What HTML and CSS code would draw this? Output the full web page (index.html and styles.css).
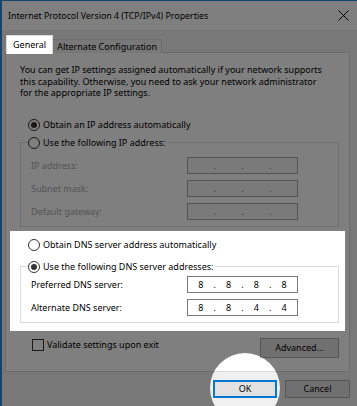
FILE: index.html
```html
<!DOCTYPE html>
<html lang="en">
<head>
  <meta charset="UTF-8" />
  <title>Internet Protocol Version 4 (TCP/IPv4) Properties</title>
  <link rel="stylesheet" href="styles.css">
</head>
<body>
  <div class="screen">
    <div class="window">
      <div class="titlebar">
        <span class="title">Internet Protocol Version 4 (TCP/IPv4) Properties</span>
        <svg class="close" width="11" height="11" viewBox="0 0 11 11">
          <path d="M0.5 0.5L10.5 10.5M10.5 0.5L0.5 10.5" stroke="#000" stroke-width="1" fill="none" />
        </svg>
      </div>

      <div class="content">
        <div class="tabs">
          <div class="tab tab-active">General</div>
          <div class="tab">Alternate Configuration</div>
        </div>

        <div class="panel">
          <p class="intro">
            You can get IP settings assigned automatically if your network supports<br>
            this capability. Otherwise, you need to ask your network administrator<br>
            for the appropriate IP settings.
          </p>

          <div class="option option-ip-auto">
            <span class="radio radio-checked"></span>
            Obtain an IP address automatically
          </div>

          <fieldset class="group group-ip">
            <legend class="option">
              <span class="radio"></span>
              Use the following IP address:
            </legend>
            <div class="field-row">
              <span class="field-label disabled">IP address:</span>
              <div class="ip-box ip-disabled">
                <span class="oct"></span><span class="dot">.</span><span class="oct"></span><span class="dot">.</span><span class="oct"></span><span class="dot">.</span><span class="oct"></span>
              </div>
            </div>
            <div class="field-row">
              <span class="field-label disabled">Subnet mask:</span>
              <div class="ip-box ip-disabled">
                <span class="oct"></span><span class="dot">.</span><span class="oct"></span><span class="dot">.</span><span class="oct"></span><span class="dot">.</span><span class="oct"></span>
              </div>
            </div>
            <div class="field-row">
              <span class="field-label disabled">Default gateway:</span>
              <div class="ip-box ip-disabled">
                <span class="oct"></span><span class="dot">.</span><span class="oct"></span><span class="dot">.</span><span class="oct"></span><span class="dot">.</span><span class="oct"></span>
              </div>
            </div>
          </fieldset>

          <div class="option option-dns-auto">
            <span class="radio"></span>
            Obtain DNS server address automatically
          </div>

          <fieldset class="group group-dns">
            <legend class="option">
              <span class="radio radio-checked"></span>
              Use the following DNS server addresses:
            </legend>
            <div class="field-row">
              <span class="field-label">Preferred DNS server:</span>
              <div class="ip-box">
                <span class="oct">8</span><span class="dot">.</span><span class="oct">8</span><span class="dot">.</span><span class="oct">8</span><span class="dot">.</span><span class="oct">8</span>
              </div>
            </div>
            <div class="field-row">
              <span class="field-label">Alternate DNS server:</span>
              <div class="ip-box">
                <span class="oct">8</span><span class="dot">.</span><span class="oct">8</span><span class="dot">.</span><span class="oct">4</span><span class="dot">.</span><span class="oct">4</span>
              </div>
            </div>
          </fieldset>

          <div class="panel-footer">
            <div class="option">
              <span class="checkbox"></span>
              Validate settings upon exit
            </div>
            <div class="button button-advanced">Advanced...</div>
          </div>
        </div>

        <div class="buttons">
          <div class="button button-default">OK</div>
          <div class="button">Cancel</div>
        </div>
      </div>
    </div>

    <!-- dim everything except the DNS block and the OK button -->
    <svg class="dim" width="357" height="406" viewBox="0 0 357 406">
      <path fill-rule="evenodd" fill="#000" fill-opacity="0.5"
        d="M0 0H357V406H0Z M10 231H345V331H10Z M210 388a35 35 0 1 0 70 0a35 35 0 1 0 -70 0Z" />
    </svg>
  </div>
</body>
</html>
```

FILE: styles.css
```css
* {
  box-sizing: border-box;
}
body {
  margin: 0;
  font-family: "Noto Sans", sans-serif;
  font-size: 9px;
  color: #000;
}
.screen {
  position: relative;
  width: 357px;
  height: 406px;
  overflow: hidden;
}
.window {
  width: 357px;
  height: 406px;
  background-color: #f0f0f0;
  border-left: 2px solid #2f86d8;
  border-top: 1px solid #2f86d8;
}
.titlebar {
  height: 29px;
  background-color: #fff;
  display: flex;
  align-items: center;
  justify-content: space-between;
  padding: 0 8px 0 6px;
  font-size: 8.8px;
}
.close {
  display: block;
}
.content {
  padding: 5px 7px 0 3px;
}
.tabs {
  display: flex;
  align-items: flex-end;
  height: 18px;
  padding-left: 1px;
}
.tab {
  height: 14px;
  line-height: 13px;
  padding: 0 4px;
  border: 1px solid #d9d9d9;
  border-bottom: none;
  background-color: #f0f0f0;
  margin-left: -1px;
}
.tab-active {
  position: relative;
  z-index: 1;
  height: 19px;
  line-height: 17px;
  padding: 0 6px;
  background-color: #fff;
  margin-left: 0;
  margin-bottom: -1px;
}
.panel {
  height: 320px;
  margin-top: -1px;
  background-color: #fff;
  border: 1px solid #d9d9d9;
  padding: 11px 0 0 14px;
}
.intro {
  margin: 0;
  line-height: 11.5px;
  white-space: nowrap;
}
.option {
  display: flex;
  align-items: center;
  gap: 3px;
  height: 14px;
  white-space: nowrap;
}
.option-ip-auto {
  margin: 19px 0 0 8px;
}
.radio {
  width: 12px;
  height: 12px;
  border: 1px solid #333;
  border-radius: 50%;
  display: flex;
  align-items: center;
  justify-content: center;
  background-color: #fff;
}
.radio-checked::after {
  content: "";
  width: 6px;
  height: 6px;
  border-radius: 50%;
  background-color: #333;
}
.checkbox {
  width: 12px;
  height: 12px;
  border: 1px solid #333;
  background-color: #fff;
}
.group {
  margin: 0 10px 0 0;
  padding: 0 0 6px 10px;
  border: 1px solid #dcdcdc;
  min-width: 0;
}
.group legend {
  padding: 0 2px 0 0;
  margin-left: -3px;
}
.group-ip {
  margin-top: 4px;
}
.group-ip .field-row:first-of-type {
  margin-top: 7px;
}
.group-dns {
  margin-top: 8px;
}
.group-dns .field-row:first-of-type {
  margin-top: 2px;
}
.field-row {
  display: flex;
  align-items: center;
  height: 17px;
  margin-top: 6px;
}
.field-label {
  width: 156px;
}
.disabled {
  color: #a8a8a8;
}
.ip-box {
  width: 111px;
  height: 17px;
  border: 1px solid #7a7a7a;
  display: flex;
  align-items: center;
  padding: 0 1px;
}
.ip-disabled {
  border-color: #a6a6a6;
  background-color: #f4f4f4;
}
.oct {
  flex: 1;
  text-align: center;
}
.dot {
  width: 4px;
  text-align: center;
}
.ip-disabled .dot {
  color: #6d6d6d;
}
.option-dns-auto {
  margin: 11px 0 0 8px;
}
.panel-footer {
  display: flex;
  justify-content: space-between;
  align-items: flex-start;
  margin: 15px 10px 0 12px;
}
.panel-footer .option {
  height: 12px;
  margin-top: 1px;
}
.button {
  height: 18px;
  line-height: 16px;
  text-align: center;
  background-color: #e1e1e1;
  border: 1px solid #adadad;
}
.button-advanced {
  width: 79px;
  height: 20px;
  line-height: 18px;
}
.buttons {
  display: flex;
  justify-content: flex-end;
  gap: 8px;
  padding-top: 8px;
}
.buttons .button {
  width: 65px;
}
.buttons .button-default {
  width: 64px;
  border: 2px solid #0078d7;
  line-height: 14px;
}
.dim {
  position: absolute;
  top: 0;
  left: 0;
}
```
